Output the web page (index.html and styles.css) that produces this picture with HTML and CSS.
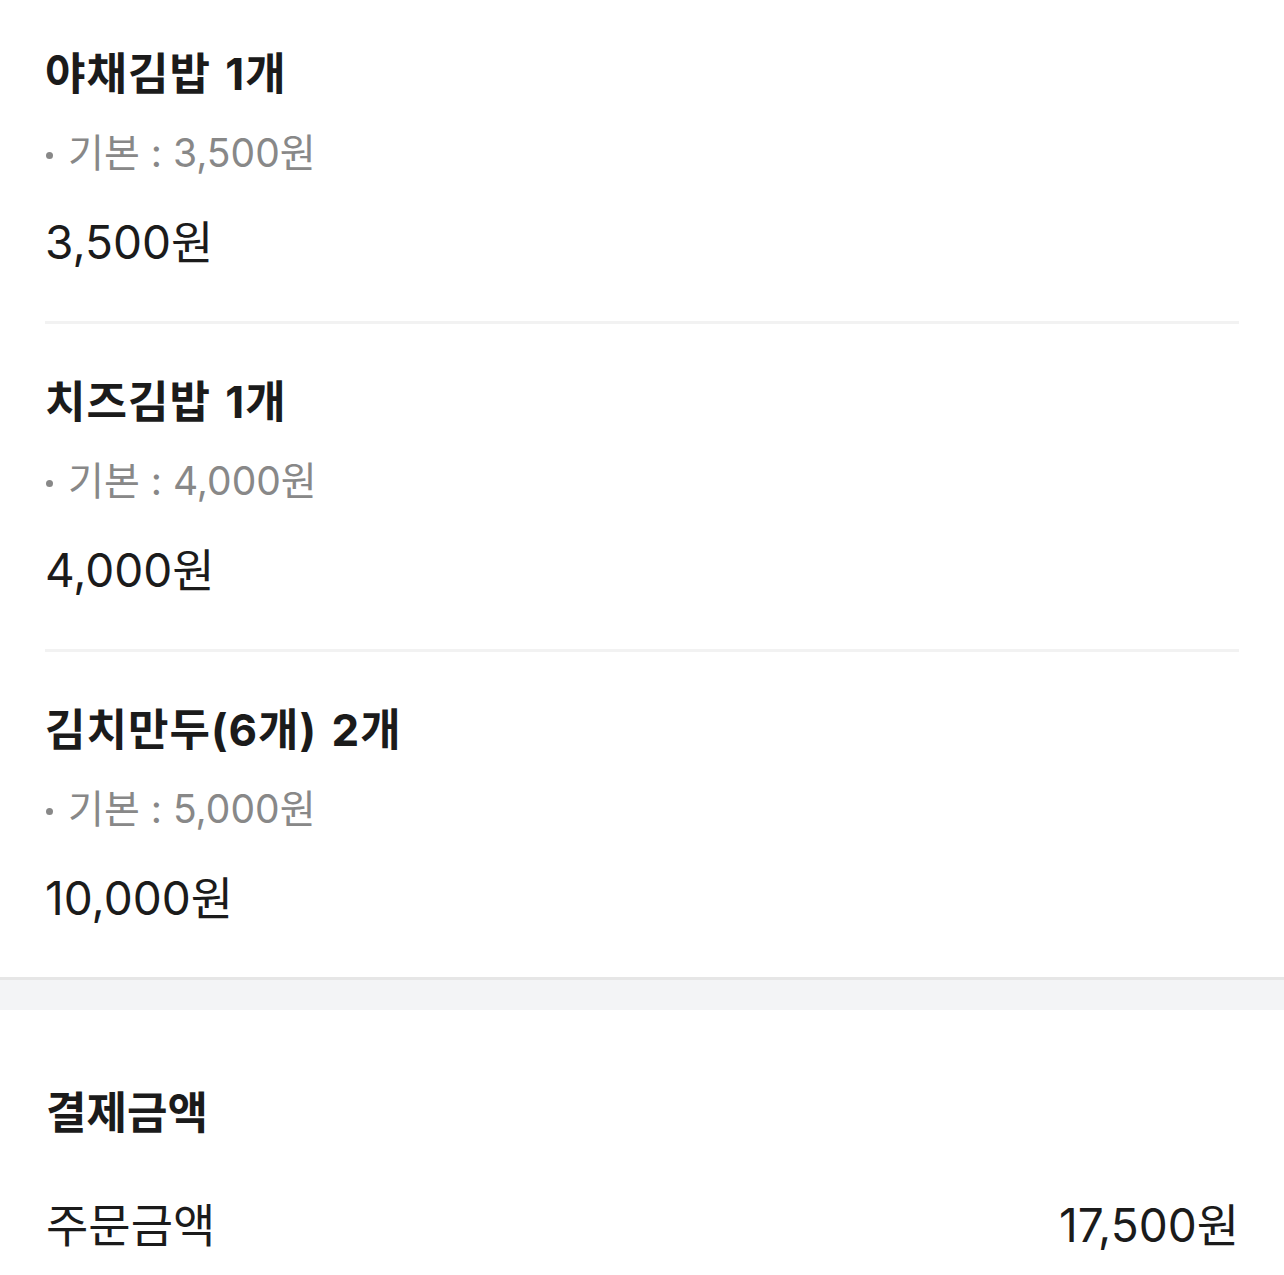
FILE: index.html
```html
<!DOCTYPE html>
<html lang="ko">
<head>
<meta charset="utf-8">
<link rel="stylesheet" href="styles.css">
</head>
<body>
<div class="page">
  <section class="items">
    <div class="item">
      <div class="item-title">야채김밥 1개</div>
      <div class="item-option"><span class="dot"></span>기본 : 3,500원</div>
      <div class="item-price">3,500원</div>
    </div>
    <div class="item">
      <div class="item-title">치즈김밥 1개</div>
      <div class="item-option"><span class="dot"></span>기본 : 4,000원</div>
      <div class="item-price">4,000원</div>
    </div>
    <div class="item">
      <div class="item-title">김치만두(6개) 2개</div>
      <div class="item-option"><span class="dot"></span>기본 : 5,000원</div>
      <div class="item-price">10,000원</div>
    </div>
  </section>
  <div class="gap-band"></div>
  <section class="payment">
    <div class="payment-title">결제금액</div>
    <div class="payment-row">
      <span class="payment-label">주문금액</span>
      <span class="payment-value">17,500원</span>
    </div>
  </section>
</div>
</body>
</html>
```

FILE: styles.css
```css
html, body {
  margin: 0;
  padding: 0;
  background: #ffffff;
}

body {
  font-family: Inter, "Noto Sans CJK KR", sans-serif;
  color: #1b1b1b;
}

.page {
  width: 1284px;
}

.items {
  border-bottom: 3px solid #e6e6e6;
}

.item {
  margin: 0 45px;
  padding: 50px 0 47px;
  border-bottom: 3px solid #f2f2f2;
  display: flex;
  flex-direction: column;
}

.item:first-child {
  padding-top: 46px;
}

.item:last-child {
  border-bottom: none;
}

.item-title {
  font-size: 44px;
  font-weight: 700;
  line-height: 56px;
  letter-spacing: 1px;
  word-spacing: 3px;
  margin-bottom: 4px;
}

.item-option {
  margin-top: 20px;
  font-size: 39px;
  line-height: 54px;
  color: #888888;
  display: flex;
  align-items: center;
}

.dot {
  width: 7px;
  height: 7px;
  border-radius: 50%;
  background: #888888;
  margin: 4px 15px 0 1px;
}

.item-price {
  margin-top: 32px;
  font-size: 46px;
  line-height: 60px;
  margin-bottom: 2px;
}

.gap-band {
  height: 30px;
  background: #f3f4f6;
}

.payment {
  padding: 73px 45px 0 46px;
}

.payment-title {
  font-size: 44px;
  font-weight: 700;
  line-height: 60px;
}

.payment-row {
  margin-top: 54px;
  display: flex;
  justify-content: space-between;
  align-items: center;
  font-size: 46px;
  line-height: 56px;
}
```
